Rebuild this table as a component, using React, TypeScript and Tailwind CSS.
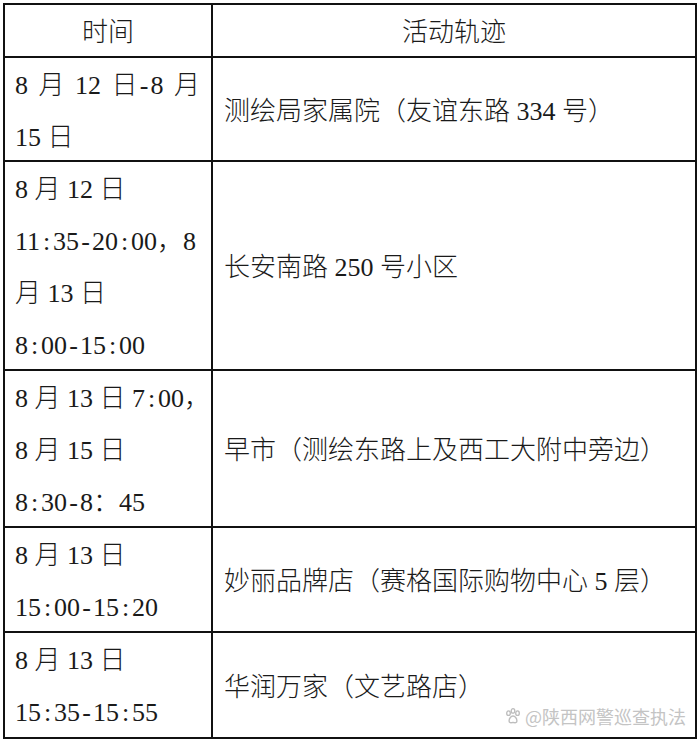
import React from "react";

const CJK = '"Liberation Serif", "Noto Sans CJK SC", serif';

type Row = { time: string[]; place: string; h: number };

// heights are the white cell heights, the 2px rules sit between them
const ROWS: Row[] = [
  { time: ["8 月 12 日-8 月", "15 日"], place: "测绘局家属院（友谊东路 334 号）", h: 102 },
  {
    time: ["8 月 12 日", "11:35-20:00，8", "月 13 日", "8:00-15:00"],
    place: "长安南路 250 号小区",
    h: 207,
  },
  {
    time: ["8 月 13 日 7:00，", "8 月 15 日", "8:30-8：45"],
    place: "早市（测绘东路上及西工大附中旁边）",
    h: 155,
  },
  { time: ["8 月 13 日", "15:00-15:20"], place: "妙丽品牌店（赛格国际购物中心 5 层）", h: 103 },
  { time: ["8 月 13 日", "15:35-15:55"], place: "华润万家（文艺路店）", h: 104 },
];

// colon and dash are half an em wide in SimSun, so give them a fixed box
function Text({ s }: { s: string }) {
  const parts = s.split(/([:\-])/);
  return (
    <>
      {parts.map((p, i) =>
        p === ":" || p === "-" ? (
          <span key={i} className="inline-block w-[13px] text-center">
            {p}
          </span>
        ) : (
          <span key={i}>{p}</span>
        )
      )}
    </>
  );
}

function Paw() {
  return (
    <svg width="18" height="18" viewBox="0 0 16 16" className="inline-block">
      <g fill="none" stroke="#bdbdbd" strokeWidth="1.2">
        <ellipse cx="4" cy="5.5" rx="1.6" ry="2" />
        <ellipse cx="8" cy="3.5" rx="1.6" ry="2" />
        <ellipse cx="12" cy="5.5" rx="1.6" ry="2" />
        <path d="M4.5 12.5c0-2.5 1.8-4.5 3.5-4.5s3.5 2 3.5 4.5c0 1.5-1.5 1.8-3.5 1.2-2 .6-3.5.3-3.5-1.2z" />
      </g>
    </svg>
  );
}

export default function App() {
  return (
    <div className="relative w-[700px] h-[741px] bg-white overflow-hidden pt-[3px] pl-[3px]">
      <div
        className="grid grid-cols-[206px_482px] gap-[2px] p-[2px] bg-[#111] w-max text-[26px] font-light text-[#1a1a1a]"
        style={{ fontFamily: CJK }}
      >
        <div className="bg-white h-[51px] pt-[3px] flex items-center justify-center">时间</div>
        <div className="bg-white h-[51px] pt-[3px] flex items-center justify-center">活动轨迹</div>
        {ROWS.map((r, i) => (
          <React.Fragment key={i}>
            <div className="bg-white pl-[10px] pt-[2px] leading-[52px] whitespace-nowrap" style={{ height: r.h }}>
              {r.time.map((t, j) => (
                <div key={j} className={i === 0 && j === 0 ? "[word-spacing:4px]" : ""}>
                  <Text s={t} />
                </div>
              ))}
            </div>
            <div className="bg-white pl-[11px] pt-[4px] flex items-center whitespace-nowrap" style={{ height: r.h }}>
              <span>
                <Text s={r.place} />
              </span>
            </div>
          </React.Fragment>
        ))}
      </div>
      <div
        className="absolute left-[504px] top-[705px] flex items-center gap-[3px] text-[18px] leading-[22px] text-[#c4c4c4]"
        style={{ fontFamily: '"Noto Sans CJK SC", sans-serif' }}
      >
        <Paw />
        <span>@陕西网警巡查执法</span>
      </div>
    </div>
  );
}
